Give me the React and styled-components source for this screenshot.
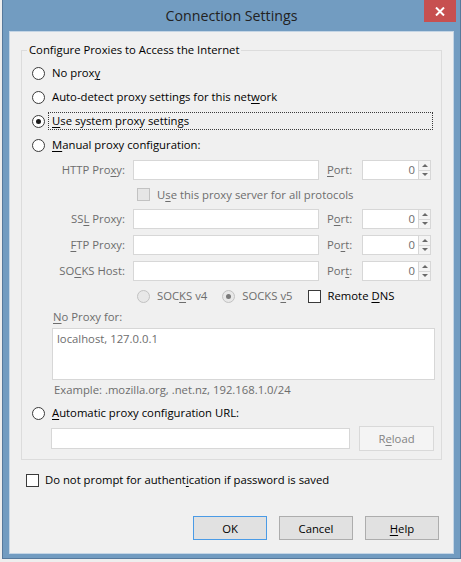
import React from 'react';
import styled, { createGlobalStyle } from 'styled-components';

const GlobalStyle = createGlobalStyle`
  html, body {
    margin: 0;
    padding: 0;
  }
  body {
    background: #eeeeee;
    font-family: 'Open Sans', 'Noto Sans', sans-serif;
    font-size: 11.3px;
    color: #000;
  }
  * {
    box-sizing: border-box;
  }
`;

const Screen = styled.div`
  padding-left: 2px;
  height: 562px;
`;

const Frame = styled.div`
  width: 459px;
  height: 559px;
  display: flex;
  flex-direction: column;
  padding: 0 6px 4px 6px;
  background: #729cc1;
  border: 1px solid #56799c;
  border-top: none;
`;

const TitleBar = styled.div`
  height: 31px;
  display: grid;
  grid-template-columns: 1fr auto 1fr;
  align-items: start;
`;

const Title = styled.div`
  grid-column: 2;
  font-size: 14.2px;
  line-height: 31px;
  color: #222;
`;

const CloseButton = styled.div`
  grid-column: 3;
  justify-self: end;
  width: 32px;
  height: 22px;
  margin-right: -2px;
  display: flex;
  align-items: center;
  justify-content: center;
  background: #c75050;
`;

const Body = styled.div`
  flex: 1;
  display: flex;
  flex-direction: column;
  background: #f0f0f0;
  border: 1px solid #c4d5e5;
`;

const Group = styled.fieldset`
  margin: 10px 11px 0;
  padding: 3px 0 8px 0;
  min-width: 0;
  border: 1px solid #dcdcdc;
`;

const Legend = styled.legend`
  margin-left: 5px;
  padding: 0 2px;
  line-height: 16px;
`;

const OptionRow = styled.div`
  display: flex;
  align-items: center;
  height: 24px;
  padding: 0 8px 0 10px;
  margin-top: ${(p) => p.$gap || 0}px;
`;

const Radio = styled.span`
  position: relative;
  width: 13px;
  height: 13px;
  flex-shrink: 0;
  border-radius: 50%;
  border: 1px solid ${(p) => (p.$disabled ? '#c2c2c2' : '#3a3a3a')};
  background: ${(p) => (p.$disabled ? '#e8e8e8' : '#fff')};
  &::after {
    content: '';
    display: ${(p) => (p.$checked ? 'block' : 'none')};
    position: absolute;
    left: 3px;
    top: 3px;
    width: 5px;
    height: 5px;
    border-radius: 50%;
    background: ${(p) => (p.$disabled ? '#7a7a7a' : '#1b1b1b')};
  }
`;

const CheckBox = styled.span`
  width: 13px;
  height: 13px;
  flex-shrink: 0;
  border: 1px solid ${(p) => (p.$disabled ? '#c2c2c2' : '#3a3a3a')};
  background: ${(p) => (p.$disabled ? '#e6e6e6' : '#fff')};
`;

const OptionLabel = styled.span`
  flex: 1;
  margin-left: 3px;
  padding: 0 3px;
  line-height: 16px;
  white-space: nowrap;
  border: 1px dotted ${(p) => (p.$focused ? '#3a3a3a' : 'transparent')};
`;

const Key = styled.span`
  text-decoration: underline;
  text-underline-offset: 2px;
`;

const ManualGrid = styled.div`
  display: grid;
  grid-template-columns: 73px 186px 27px 69px;
  grid-template-rows: 26px 23px 26px 26px 26px 24px;
  column-gap: 8px;
  align-items: center;
  margin-left: 30px;
  color: #6d6d6d;
`;

const FieldLabel = styled.span`
  text-align: ${(p) => (p.$left ? 'left' : 'right')};
  white-space: nowrap;
  line-height: 16px;
`;

const TextField = styled.div`
  height: ${(p) => p.$h || 20}px;
  flex: ${(p) => (p.$grow ? 1 : 'none')};
  border: 1px solid #d7d7d7;
  background: #fff;
`;

const PortBox = styled.div`
  display: flex;
  height: 20px;
`;

const PortValue = styled.div`
  width: 57px;
  padding-right: 3px;
  text-align: right;
  line-height: 18px;
  border: 1px solid #d7d7d7;
  background: #fff;
  color: #6d6d6d;
`;

const Spin = styled.div`
  width: 12px;
  display: flex;
  flex-direction: column;
  border: 1px solid #d7d7d7;
  border-left: none;
  background: #f4f4f4;
`;

const SpinHalf = styled.div`
  flex: 1;
  display: flex;
  align-items: center;
  justify-content: center;
  &::before {
    content: '';
    border-left: 3px solid transparent;
    border-right: 3px solid transparent;
    ${(p) => (p.$down ? 'border-top' : 'border-bottom')}: 3px solid #6a6a6a;
  }
  & + & {
    border-top: 1px solid #d7d7d7;
  }
`;

const SubRow = styled.div`
  grid-column: 2 / 5;
  display: flex;
  align-items: center;
  padding-left: 4px;
`;

const Choice = styled.span`
  display: flex;
  align-items: center;
  gap: 7px;
  margin-left: ${(p) => p.$gap || 0}px;
  line-height: 16px;
  white-space: nowrap;
  color: ${(p) => (p.$dim ? '#6d6d6d' : '#000')};
`;

const NoProxyBlock = styled.div`
  display: flex;
  flex-direction: column;
  margin: 1px 6px 0 30px;
  color: #6d6d6d;
`;

const Line = styled.div`
  line-height: 16px;
  margin-top: ${(p) => p.$gap || 0}px;
  padding-left: ${(p) => p.$indent || 0}px;
`;

const TextArea = styled.div`
  height: 52px;
  margin-top: 3px;
  padding: 2px 4px;
  line-height: 16px;
  border: 1px solid #d7d7d7;
  background: #fff;
`;

const UrlRow = styled.div`
  display: flex;
  align-items: center;
  gap: 9px;
  height: 25px;
  margin: 1px 7px 0 29px;
`;

const Button = styled.div`
  width: ${(p) => p.$w || 74}px;
  height: ${(p) => p.$h || 24}px;
  display: flex;
  align-items: center;
  justify-content: center;
  border: 1px solid ${(p) => (p.$default ? '#4b9be6' : p.$disabled ? '#d9d9d9' : '#adadad')};
  background: ${(p) => (p.$disabled ? '#f4f4f4' : '#e1e1e1')};
  color: ${(p) => (p.$disabled ? '#838383' : '#000')};
`;

const PromptRow = styled.div`
  display: flex;
  align-items: center;
  gap: 6px;
  margin: 12px 0 0 16px;
  line-height: 16px;
`;

const ButtonRow = styled.div`
  display: flex;
  justify-content: flex-end;
  gap: 12px;
  margin: auto 14px 13px 0;
`;

const PortLabel = ({ children }) => <FieldLabel $left>{children}</FieldLabel>;

const Port = () => (
  <PortBox>
    <PortValue>0</PortValue>
    <Spin>
      <SpinHalf />
      <SpinHalf $down />
    </Spin>
  </PortBox>
);

const App = () => {
  return (
    <Screen>
      <GlobalStyle />
      <Frame>
        <TitleBar>
          <Title>Connection Settings</Title>
          <CloseButton>
            <svg width="10" height="9" viewBox="0 0 10 9">
              <path d="M1 0.5 L9 8.5 M9 0.5 L1 8.5" stroke="#fff" strokeWidth="2" />
            </svg>
          </CloseButton>
        </TitleBar>
        <Body>
          <Group>
            <Legend>Configure Proxies to Access the Internet</Legend>
            <OptionRow>
              <Radio />
              <OptionLabel>
                No prox<Key>y</Key>
              </OptionLabel>
            </OptionRow>
            <OptionRow>
              <Radio />
              <OptionLabel>
                Auto-detect proxy settings for this net<Key>w</Key>ork
              </OptionLabel>
            </OptionRow>
            <OptionRow>
              <Radio $checked />
              <OptionLabel $focused>
                <Key>U</Key>se system proxy settings
              </OptionLabel>
            </OptionRow>
            <OptionRow>
              <Radio />
              <OptionLabel>
                <Key>M</Key>anual proxy configuration:
              </OptionLabel>
            </OptionRow>

            <ManualGrid>
              <FieldLabel>
                HTTP Pro<Key>x</Key>y:
              </FieldLabel>
              <TextField />
              <PortLabel>
                <Key>P</Key>ort:
              </PortLabel>
              <Port />

              <SubRow>
                <Choice $dim>
                  <CheckBox $disabled />
                  <span>
                    U<Key>s</Key>e this proxy server for all protocols
                  </span>
                </Choice>
              </SubRow>

              <FieldLabel>
                SS<Key>L</Key> Proxy:
              </FieldLabel>
              <TextField />
              <PortLabel>
                P<Key>o</Key>rt:
              </PortLabel>
              <Port />

              <FieldLabel>
                <Key>F</Key>TP Proxy:
              </FieldLabel>
              <TextField />
              <PortLabel>
                Po<Key>r</Key>t:
              </PortLabel>
              <Port />

              <FieldLabel>
                SO<Key>C</Key>KS Host:
              </FieldLabel>
              <TextField />
              <PortLabel>
                Por<Key>t</Key>:
              </PortLabel>
              <Port />

              <SubRow>
                <Choice $dim>
                  <Radio $disabled />
                  <span>
                    SOC<Key>K</Key>S v4
                  </span>
                </Choice>
                <Choice $dim $gap={15}>
                  <Radio $disabled $checked />
                  <span>
                    SOCKS <Key>v</Key>5
                  </span>
                </Choice>
                <Choice $gap={15}>
                  <CheckBox />
                  <span>
                    Remote <Key>D</Key>NS
                  </span>
                </Choice>
              </SubRow>
            </ManualGrid>

            <NoProxyBlock>
              <Line $indent={1}>
                <Key>N</Key>o Proxy for:
              </Line>
              <TextArea>localhost, 127.0.0.1</TextArea>
              <Line $gap={2} $indent={2}>
                Example: .mozilla.org, .net.nz, 192.168.1.0/24
              </Line>
            </NoProxyBlock>

            <OptionRow $gap={3}>
              <Radio />
              <OptionLabel>
                <Key>A</Key>utomatic proxy configuration URL:
              </OptionLabel>
            </OptionRow>
            <UrlRow>
              <TextField $grow $h={21} />
              <Button $w={75} $h={25} $disabled>
                <span>
                  R<Key>e</Key>load
                </span>
              </Button>
            </UrlRow>
          </Group>

          <PromptRow>
            <CheckBox />
            <span>
              Do not prompt for authent<Key>i</Key>cation if password is saved
            </span>
          </PromptRow>

          <ButtonRow>
            <Button $default>OK</Button>
            <Button>Cancel</Button>
            <Button>
              <span>
                <Key>H</Key>elp
              </span>
            </Button>
          </ButtonRow>
        </Body>
      </Frame>
    </Screen>
  );
};

export default App;
